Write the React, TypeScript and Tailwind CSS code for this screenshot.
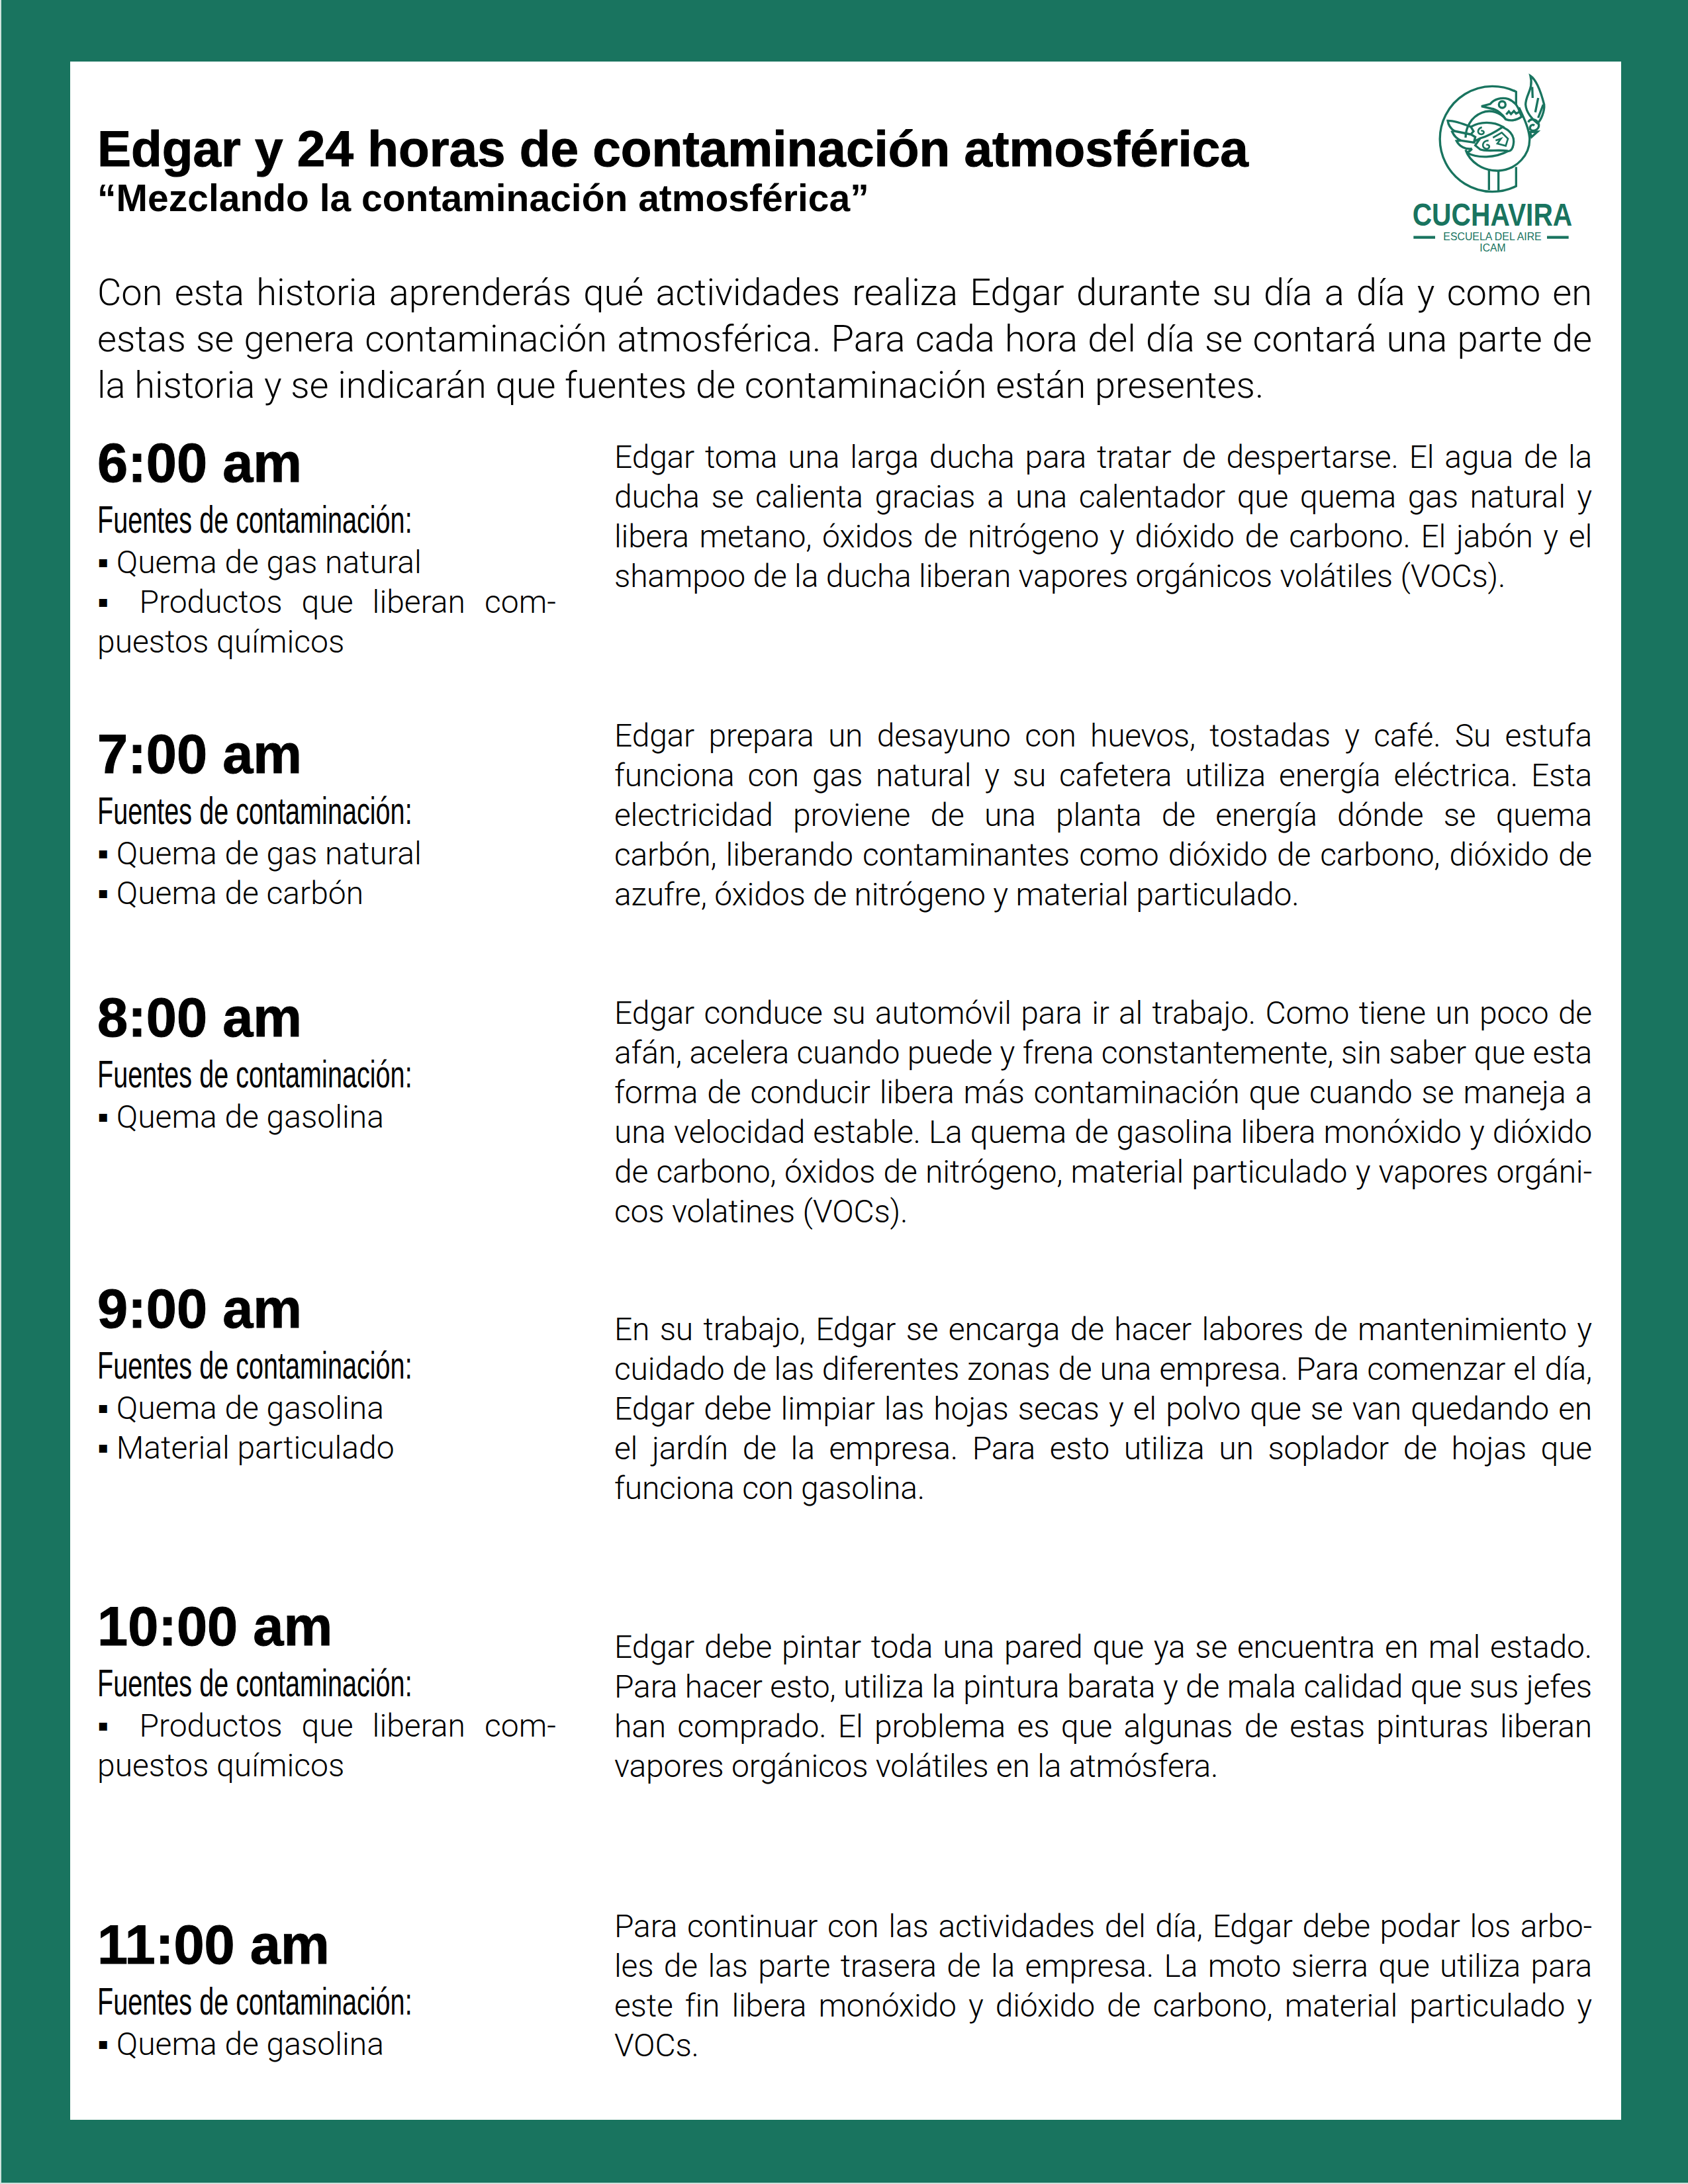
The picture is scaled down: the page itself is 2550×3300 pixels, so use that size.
import React from "react";

const GREEN = "#19745f";

const intro = [
  "Con esta historia aprenderás qué actividades realiza Edgar durante su día a día y como en",
  "estas se genera contaminación atmosférica. Para cada hora del día se contará una parte de",
  "la historia y se indicarán que fuentes de contaminación están presentes.",
];

const rows = [
  {
    time: "6:00 am",
    height: "h-[421px]",
    leftTop: "-mt-[11px]",
    rightTop: "pt-0",
    sources: [["▪ Quema de gas natural"], ["▪ Productos que liberan com-", "puestos químicos"]],
    text: [
      "Edgar toma una larga ducha para tratar de despertarse. El agua de la",
      "ducha se calienta gracias a una calentador que quema gas natural y",
      "libera metano, óxidos de nitrógeno y dióxido de carbono. El jabón y el",
      "shampoo de la ducha liberan vapores orgánicos volátiles (VOCs).",
    ],
  },
  {
    time: "7:00 am",
    height: "h-[419px]",
    leftTop: "pt-[8px]",
    rightTop: "pt-0",
    sources: [["▪ Quema de gas natural"], ["▪ Quema de carbón"]],
    text: [
      "Edgar prepara un desayuno con huevos, tostadas y café. Su estufa",
      "funciona con gas natural y su cafetera utiliza energía eléctrica. Esta",
      "electricidad proviene de una planta de energía dónde se quema",
      "carbón, liberando contaminantes como dióxido de carbono, dióxido de",
      "azufre, óxidos de nitrógeno y material particulado.",
    ],
  },
  {
    time: "8:00 am",
    height: "h-[427px]",
    leftTop: "-mt-[13px]",
    rightTop: "pt-0",
    sources: [["▪ Quema de gasolina"]],
    text: [
      "Edgar conduce su automóvil para ir al trabajo. Como tiene un poco de",
      "afán, acelera cuando puede y frena constantemente, sin saber que esta",
      "forma de conducir libera más contaminación que cuando se maneja a",
      "una velocidad estable. La quema de gasolina libera monóxido y dióxido",
      "de carbono, óxidos de nitrógeno, material particulado y vapores orgáni-",
      "cos volatines (VOCs).",
    ],
  },
  {
    time: "9:00 am",
    height: "h-[480px]",
    leftTop: "pt-0",
    rightTop: "pt-[51px]",
    sources: [["▪ Quema de gasolina"], ["▪ Material particulado"]],
    text: [
      "En su trabajo, Edgar se encarga de hacer labores de mantenimiento y",
      "cuidado de las diferentes zonas de una empresa. Para comenzar el día,",
      "Edgar debe limpiar las hojas secas y el polvo que se van quedando en",
      "el jardín de la empresa. Para esto utiliza un soplador de hojas que",
      "funciona con gasolina.",
    ],
  },
  {
    time: "10:00 am",
    height: "h-[473px]",
    leftTop: "pt-0",
    rightTop: "pt-[51px]",
    sources: [["▪ Productos que liberan com-", "puestos químicos"]],
    text: [
      "Edgar debe pintar toda una pared que ya se encuentra en mal estado.",
      "Para hacer esto, utiliza la pintura barata y de mala calidad que sus jefes",
      "han comprado. El problema es que algunas de estas pinturas liberan",
      "vapores orgánicos volátiles en la atmósfera.",
    ],
  },
  {
    time: "11:00 am",
    height: "h-[280px]",
    leftTop: "pt-[8px]",
    rightTop: "pt-0",
    sources: [["▪ Quema de gasolina"]],
    text: [
      "Para continuar con las actividades del día, Edgar debe podar los arbo-",
      "les de las parte trasera de la empresa. La moto sierra que utiliza para",
      "este fin libera monóxido y dióxido de carbono, material particulado y",
      "VOCs.",
    ],
  },
];

// una linea por fila para conservar los cortes del original; la ultima no se justifica
function Lines({ lines }: { lines: string[] }) {
  return (
    <>
      {lines.map((line, i) => (
        <div
          key={i}
          className={i < lines.length - 1 ? "text-justify [text-align-last:justify]" : "text-left"}
        >
          {line}
        </div>
      ))}
    </>
  );
}

function Logo() {
  return (
    <svg viewBox="0 0 1020 900" className="w-[340px] h-[300px] shrink-0 -mr-[17px]" fill="none" stroke={GREEN} strokeWidth="10">
      {/* anillo y base */}
      <path d="M625 195 V137 A239 239 0 1 0 625 565 V478" />
      <path d="M502 492 V582 M545 495 V585" />
      {/* cuerpo */}
      <path d="M578 262 C555 232 510 215 470 232 C420 252 396 300 396 345 M396 400 C415 455 475 497 545 495 C630 490 690 420 686 345 C682 300 660 255 638 208" />
      {/* cabeza */}
      <path d="M468 203 L508 192 C525 170 560 160 590 170 C615 180 632 200 640 225 L650 250 C625 268 600 270 578 262 C565 240 540 218 512 213 Z" />
      <circle cx="562" cy="195" r="15" />
      <path d="M580 240 L592 226 L602 238 L615 224 L625 236 L640 228" />
      {/* ala: plumas */}
      <path d="M420 296 C385 282 345 268 315 268 C318 290 330 305 345 315 L335 318 C345 340 360 352 375 358 L355 360 C368 385 395 400 425 395" />
      <path d="M345 315 L418 330 M375 358 L440 368" />
      {/* ala: ojo superior */}
      <path d="M420 296 C460 272 520 270 565 296 C530 320 495 340 462 348 L435 362 L440 342 L420 330 L432 316 Z" />
      <path d="M470 298 C450 303 445 328 468 330 C485 328 480 310 466 314" strokeWidth="8" />
      {/* ala: parte inferior */}
      <path d="M565 298 C595 312 615 335 614 365 C612 395 600 410 585 405 C540 398 490 410 462 398 L440 380 L462 348" />
      <path d="M500 358 C470 358 465 393 492 396 C510 393 505 373 490 378" strokeWidth="8" />
      <path d="M520 345 L560 322 L588 350 L578 382 L540 372 L556 350 L532 358" strokeWidth="8" />
      <path d="M400 412 C450 440 530 438 590 405" />
      <path d="M425 395 C420 402 410 410 400 412" />
      {/* pluma */}
      <path d="M690 65 C720 85 738 140 752 195 C755 225 738 265 722 280 C700 265 670 230 668 195 C668 150 705 125 690 65 Z" />
      <path d="M698 115 L700 165 M725 165 L712 230 M748 195 L725 255" />
      <path d="M680 275 C690 255 720 260 728 285 C730 305 710 320 692 310 C680 300 695 280 708 290" />
      <path d="M688 320 L722 318 L695 342 Z" />
      {/* marca */}
      <path d="M160 797 H258 M765 797 H863" strokeWidth="13" />
      <g fill={GREEN} stroke="none" className="font-['Liberation_Sans',sans-serif]">
        <text x="155" y="745" fontSize="142" fontWeight="700" textLength="725" lengthAdjust="spacingAndGlyphs">CUCHAVIRA</text>
        <text x="295" y="810" fontSize="50" textLength="445" lengthAdjust="spacingAndGlyphs">ESCUELA DEL AIRE</text>
        <text x="460" y="860" fontSize="50" textLength="118" lengthAdjust="spacingAndGlyphs">ICAM</text>
      </g>
    </svg>
  );
}

export default function App() {
  return (
    <div className="w-[2550px] h-[3300px] bg-[#19745f] border-l-[2px] border-b-[2px] border-[#cfe3dd] pl-[104px] pr-[101px] pt-[93px] pb-[95px] font-['Liberation_Sans',sans-serif] text-black">
      <div className="h-full bg-white pl-[41px] pr-[44px]">
        {/* encabezado */}
        <div className="flex justify-between h-[300px]">
          <div className="pt-[89px]">
            <h1 className="text-[76.5px] leading-[86px] font-bold [-webkit-text-stroke:1px_black]">Edgar y 24 horas de contaminación atmosférica</h1>
            <h2 className="text-[57px] leading-[62px] font-bold">“Mezclando la contaminación atmosférica”</h2>
          </div>
          <Logo />
        </div>

        <div className="text-[56px] leading-[70px] font-['Roboto',sans-serif] font-light mt-[14px] whitespace-nowrap">
          <Lines lines={intro} />
        </div>

        <div className="mt-[44px]">
          {rows.map((row) => (
            <div key={row.time} className={`flex justify-between ${row.height}`}>
              <div className={`w-[693px] ${row.leftTop}`}>
                <div className="text-[83px] leading-[100px] font-bold [-webkit-text-stroke:1px_black]">{row.time}</div>
                <div className="text-[58px] leading-[70px] font-['Liberation_Sans_Narrow',sans-serif] origin-left scale-x-[0.683] whitespace-nowrap">
                  Fuentes de contaminación:
                </div>
                <div className="text-[48px] leading-[60px] font-['Roboto',sans-serif] font-light whitespace-nowrap">
                  {row.sources.map((lines, i) => (
                    <Lines key={i} lines={lines} />
                  ))}
                </div>
              </div>
              <div className={`w-[1477px] text-[48px] leading-[60px] tracking-[-0.2px] font-['Roboto',sans-serif] font-light whitespace-nowrap ${row.rightTop}`}>
                <Lines lines={row.text} />
              </div>
            </div>
          ))}
        </div>
      </div>
    </div>
  );
}
